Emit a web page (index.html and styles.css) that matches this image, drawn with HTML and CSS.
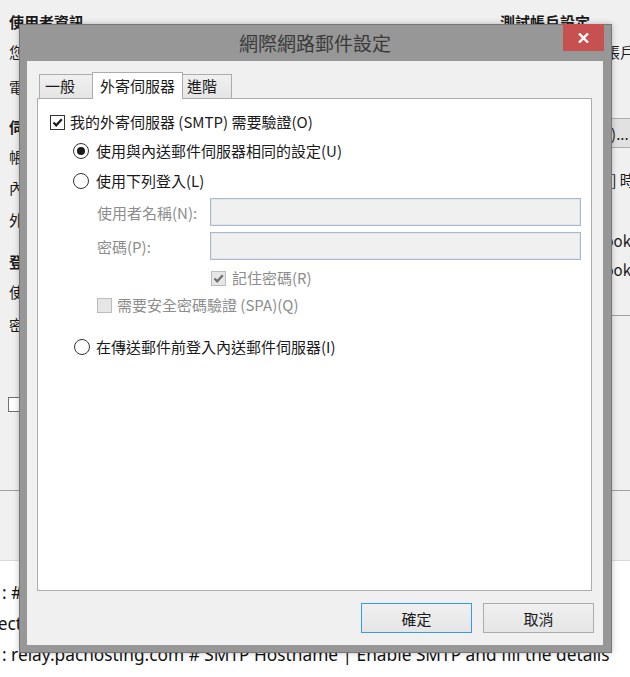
FILE: index.html
```html
<!DOCTYPE html>
<html lang="zh-Hant">
<head>
    <meta charset="UTF-8">
    <meta name="viewport" content="width=device-width, initial-scale=1.0">
    <title>網際網路郵件設定</title>
    <link rel="stylesheet" href="styles.css">
</head>
<body>

    <div class="desk">
        <!-- account wizard behind the dialog -->
        <div class="wizard">
            <div class="wizard-left">
                <div class="w-row w-head gap-top">使用者資訊</div>
                <div class="w-row gap-10">您的名稱:</div>
                <div class="w-row gap-15">電子郵件地址:</div>
                <div class="w-row w-head gap-20">伺服器資訊</div>
                <div class="w-row gap-10">帳戶類型:</div>
                <div class="w-row gap-11">內送郵件伺服器:</div>
                <div class="w-row gap-12">外寄郵件伺服器 (SMTP):</div>
                <div class="w-row w-head gap-22">登入資訊</div>
                <div class="w-row gap-10">使用者名稱:</div>
                <div class="w-row gap-13">密碼:</div>
                <div class="w-row w-check gap-59"><span class="w-box"></span>需要安全密碼驗證 (SPA)</div>
            </div>
            <div class="wizard-right">
                <div class="w-row w-head gap-top">測試帳戶設定</div>
                <div class="w-row gap-10">我們建議您測試帳戶以確保項目均正確無誤。</div>
                <button class="w-button">測試帳戶設定(T)...</button>
                <div class="w-row w-auto">按 [下一步] 時自動測試帳戶設定</div>
                <div class="w-row w-radio gap-41">新增 Outlook 資料檔(W)</div>
                <div class="w-row w-radio gap-9">現有 Outlook 資料檔(X)</div>
                <div class="w-rule"></div>
            </div>
        </div>
        <div class="wizard-foot"></div>
        <div class="notes">
            <div class="note">: # Username</div>
            <div class="note note-cut">Connect to your mail server</div>
            <div class="note">: relay.pachosting.com # SMTP Hostname | Enable SMTP and fill the details</div>
        </div>
    </div>

    <div class="dialog">
        <div class="dlg-title">網際網路郵件設定</div>
        <button class="dlg-close" title="關閉">
            <svg width="11" height="10" viewBox="0 0 11 10">
                <path d="M1 0.5 L10 9.5 M10 0.5 L1 9.5" stroke="#fff" stroke-width="2.4" fill="none"/>
            </svg>
        </button>

        <div class="dlg-client">
            <div class="tabs">
                <div class="tab tab-general">一般</div>
                <div class="tab tab-active">外寄伺服器</div>
                <div class="tab tab-adv">進階</div>
            </div>

            <div class="tab-panel">
                <div class="opt-row row-auth">
                    <span class="check"><svg width="13" height="13" viewBox="0 0 13 13"><path d="M2.5 6.5 L5.2 9.3 L10.8 3.2" stroke="#1a1a1a" stroke-width="2.2" fill="none"/></svg></span>
                    我的外寄伺服器 (SMTP) 需要驗證(O)
                </div>
                <div class="opt-row row-same">
                    <span class="radio radio-on"></span>
                    使用與內送郵件伺服器相同的設定(U)
                </div>
                <div class="opt-row row-login">
                    <span class="radio"></span>
                    使用下列登入(L)
                </div>

                <div class="fields">
                    <label class="field-label">使用者名稱(N):</label>
                    <div class="field-input"></div>
                    <label class="field-label">密碼(P):</label>
                    <div class="field-input"></div>
                </div>

                <div class="opt-row row-remember disabled">
                    <span class="check check-off"><svg width="13" height="13" viewBox="0 0 13 13"><path d="M2.5 6.5 L5.2 9.3 L10.8 3.2" stroke="#6f6f6f" stroke-width="2.2" fill="none"/></svg></span>
                    記住密碼(R)
                </div>
                <div class="opt-row row-spa disabled">
                    <span class="check check-off"></span>
                    需要安全密碼驗證 (SPA)(Q)
                </div>
                <div class="opt-row row-before">
                    <span class="radio"></span>
                    在傳送郵件前登入內送郵件伺服器(I)
                </div>
            </div>

            <div class="dlg-buttons">
                <button class="btn btn-default">確定</button>
                <button class="btn">取消</button>
            </div>
        </div>
    </div>

</body>
</html>
```

FILE: styles.css
```css
body {
    margin: 0;
    width: 630px;
    height: 677px;
    overflow: hidden;
    position: relative;
    background-color: #f0f0f0;
    font-family: "Noto Sans CJK TC", "Noto Sans", sans-serif;
    font-size: 15px;
    color: #1a1a1a;
}

/* ---------- window behind ---------- */
.desk {
    display: flex;
    flex-direction: column;
    height: 677px;
}
.wizard {
    height: 490px;
    display: grid;
    grid-template-columns: 500px 1fr;
    overflow: hidden;
}
.wizard-left {
    padding-left: 9px;
}
.w-row {
    height: 20px;
    line-height: 20px;
    white-space: nowrap;
}
.w-head {
    font-weight: bold;
}
.gap-top { margin-top: 12px; }
.gap-9 { margin-top: 9px; }
.gap-10 { margin-top: 10px; }
.gap-11 { margin-top: 11px; }
.gap-12 { margin-top: 12px; }
.gap-13 { margin-top: 13px; }
.gap-15 { margin-top: 15px; }
.gap-20 { margin-top: 20px; }
.gap-22 { margin-top: 22px; }
.gap-41 { margin-top: 41px; }
.gap-59 { margin-top: 59px; }
.w-check {
    display: flex;
    align-items: center;
    gap: 6px;
    margin-left: -1px;
}
.w-box {
    width: 13px;
    height: 13px;
    border: 1px solid #707070;
    background: #fff;
}
.w-button {
    margin-top: 56px;
    margin-left: -6px;
    width: 170px;
    height: 30px;
    border: 1px solid #adadad;
    background: #e1e1e1;
    font: inherit;
    color: #1a1a1a;
    text-align: left;
    padding: 0 0 0 12px;
    white-space: nowrap;
}
.w-auto {
    margin-top: 22px;
    padding-left: 43px;
}
.w-radio {
    padding-left: 41px;
}
.w-rule {
    margin-top: 35px;
    border-top: 1px solid #a0a0a0;
}
.wizard-foot {
    height: 69px;
    border-top: 1px solid #a0a0a0;
    border-bottom: 1px solid #d9d9d9;
}
.notes {
    flex: 1;
    background: #fff;
    padding: 16px 0 0 2px;
    font-family: "Noto Sans", sans-serif;
    font-size: 17.3px;
    color: #111;
}
.note {
    height: 31px;
    line-height: 31px;
    white-space: nowrap;
}
.note-cut {
    margin-left: -47px;
}

/* ---------- dialog ---------- */
.dialog {
    position: absolute;
    left: 19px;
    top: 24px;
    width: 593px;
    height: 629px;
    box-sizing: border-box;
    border: 1px solid #777;
    background-color: #979797;
    padding: 0 8px 7px 7px;
    box-shadow: 0 0 6px rgba(0, 0, 0, 0.25);
}
.dlg-title {
    height: 36px;
    line-height: 36px;
    text-align: center;
    font-size: 19px;
    color: #3a3a3a;
}
.dlg-close {
    position: absolute;
    top: -1px;
    right: 7px;
    width: 41px;
    height: 27px;
    border: none;
    padding: 0;
    background-color: #c75050;
    display: flex;
    align-items: center;
    justify-content: center;
}
.dlg-client {
    height: 584px;
    background-color: #f0f0f0;
    padding: 0 11px 0 10px;
    box-sizing: border-box;
}

/* tabs */
.tabs {
    display: flex;
    align-items: flex-end;
    height: 26px;
    padding: 11px 0 0 2px;
}
.tab {
    box-sizing: border-box;
    height: 24px;
    line-height: 22px;
    border: 1px solid #acacac;
    border-bottom: none;
    background: linear-gradient(#f0f0f0, #e5e5e5);
    white-space: nowrap;
}
.tab-general {
    width: 54px;
    padding-left: 5px;
    margin-right: -1px;
}
.tab-active {
    width: 91px;
    height: 27px;
    line-height: 25px;
    padding-left: 7px;
    margin-bottom: -1px;
    background: #fff;
    position: relative;
    z-index: 1;
}
.tab-adv {
    width: 50px;
    padding-left: 4px;
    margin-left: -1px;
}
.tab-panel {
    height: 493px;
    box-sizing: border-box;
    border: 1px solid #acacac;
    background-color: #fff;
    display: flex;
    flex-direction: column;
}

/* options inside the panel */
.opt-row {
    display: flex;
    align-items: center;
    height: 20px;
    line-height: 20px;
    white-space: nowrap;
}
.row-auth { margin: 13px 0 0 12px; gap: 5px; }
.row-same { margin: 9px 0 0 35px; gap: 7px; }
.row-login { margin: 10px 0 0 35px; gap: 7px; }
.row-remember { margin: 8px 0 0 173px; gap: 6px; }
.row-spa { margin: 7px 0 0 59px; gap: 5px; }
.row-before { margin: 22px 0 0 36px; gap: 6px; }

.disabled {
    color: #8d8d8d;
}
.check {
    width: 15px;
    height: 15px;
    box-sizing: border-box;
    border: 1px solid #333;
    background: #fff;
    display: flex;
    align-items: center;
    justify-content: center;
}
.check-off {
    border-color: #bcbcbc;
    background: #e6e6e6;
}
.radio {
    width: 16px;
    height: 16px;
    box-sizing: border-box;
    border: 1px solid #333;
    border-radius: 50%;
    background: #fff;
    display: flex;
    align-items: center;
    justify-content: center;
}
.radio-on::after {
    content: "";
    width: 8px;
    height: 8px;
    border-radius: 50%;
    background: #1a1a1a;
}

.fields {
    display: grid;
    grid-template-columns: 113px 371px;
    grid-auto-rows: 28px;
    row-gap: 6px;
    margin: 7px 0 0 59px;
    align-items: center;
    color: #8d8d8d;
}
.field-input {
    height: 28px;
    box-sizing: border-box;
    border: 1px solid #a9b9cd;
    background: #f0f0f0;
    box-shadow: inset 0 0 0 1px #dfe6ee;
}

/* buttons */
.dlg-buttons {
    display: flex;
    justify-content: flex-end;
    gap: 11px;
    margin: 12px -2px 0 0;
}
.btn {
    width: 111px;
    height: 30px;
    border: 1px solid #acacac;
    background: linear-gradient(#f0f0f0, #e5e5e5);
    font: inherit;
    color: #1a1a1a;
    padding: 0;
}
.btn-default {
    border-color: #3399ff;
}
```
